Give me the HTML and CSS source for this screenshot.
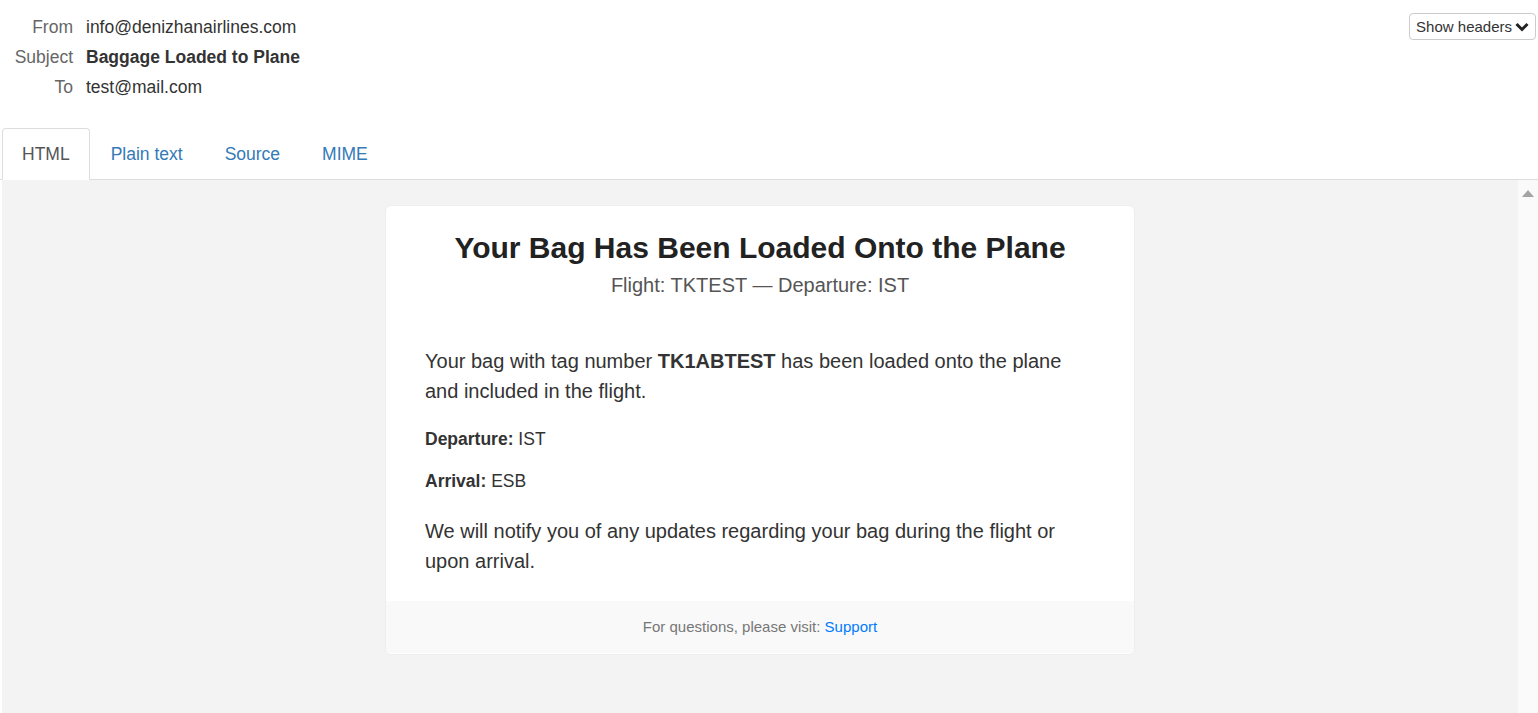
FILE: index.html
```html
<!DOCTYPE html>
<html>
<head>
<meta charset="utf-8">
<link rel="stylesheet" href="styles.css">
</head>
<body>
<div class="page">
  <div class="headers">
    <div class="rows">
      <div class="row"><span class="label">From</span><span class="value">info@denizhanairlines.com</span></div>
      <div class="row"><span class="label">Subject</span><span class="value bold">Baggage Loaded to Plane</span></div>
      <div class="row"><span class="label">To</span><span class="value">test@mail.com</span></div>
    </div>
    <button class="show-btn">Show headers <svg class="chev" width="14" height="12" viewBox="0 0 14 12"><path d="M1.5 3 L7 8.5 L12.5 3" fill="none" stroke="#222" stroke-width="3" stroke-linejoin="miter"/></svg></button>
  </div>
  <div class="tabs">
    <div class="tab active">HTML</div>
    <div class="tab">Plain text</div>
    <div class="tab">Source</div>
    <div class="tab">MIME</div>
  </div>
  <div class="preview">
    <div class="canvas">
      <div class="card">
        <div class="card-head">
          <h1 class="title">Your Bag Has Been Loaded Onto the Plane</h1>
          <div class="subtitle">Flight: TKTEST — Departure: IST</div>
        </div>
        <div class="card-body">
          <p class="lead first">Your bag with tag number <strong>TK1ABTEST</strong> has been loaded onto the plane and included in the flight.</p>
          <p class="info">Departure: <span class="plain">IST</span></p>
          <p class="info last">Arrival: <span class="plain">ESB</span></p>
          <p class="lead final">We will notify you of any updates regarding your bag during the flight or upon arrival.</p>
        </div>
        <div class="card-foot">For questions, please visit: <a class="link">Support</a></div>
      </div>
    </div>
    <div class="scrollbar"><div class="arrow"></div></div>
  </div>
</div>
</body>
</html>
```
FILE: styles.css
```css
* { box-sizing: border-box; }
html, body { margin: 0; padding: 0; height: 100%; }
body {
  font-family: "Liberation Sans", Arial, sans-serif;
  color: #333;
  background: #fff;
  overflow: hidden;
}
.page { display: flex; flex-direction: column; height: 713px; }
.headers {
  display: flex;
  justify-content: space-between;
  align-items: flex-start;
  padding: 12px 2px 0 0;
  height: 128px;
}
.rows { display: flex; flex-direction: column; }
.row { display: flex; height: 30px; align-items: center; font-size: 17.5px; }
.label { width: 73px; text-align: right; color: #666; }
.value { margin-left: 13px; color: #333; }
.bold { font-weight: bold; }
.show-btn {
  margin-top: 1px;
  height: 27px;
  padding: 0 6px 0 6px;
  border: 1px solid #ccc;
  border-radius: 4px;
  background: #fff;
  font-family: "Liberation Sans", Arial, sans-serif;
  font-size: 15px;
  color: #333;
  display: flex;
  align-items: center;
  gap: 3px;
}
.chev { margin-top: 1px; }
.tabs {
  display: flex;
  padding-left: 2px;
  border-bottom: 1px solid #ddd;
  height: 52px;
}
.tab {
  padding: 0 20px;
  display: flex;
  align-items: center;
  font-size: 17.5px;
  color: #337ab7;
  border: 1px solid transparent;
  border-radius: 4px 4px 0 0;
  margin-bottom: -1px;
}
.tab.active {
  color: #555;
  background: #fff;
  border-color: #ddd;
  border-bottom-color: #fff;
  padding: 0 19px 0 19px;
}
.preview { flex: 1; display: flex; padding-left: 2px; }
.canvas {
  flex: 1;
  background: #f3f3f3;
  display: flex;
  justify-content: center;
  align-items: flex-start;
  padding-top: 25px;
}
.scrollbar { width: 20px; background: #fafafa; display: flex; justify-content: center; padding-top: 10px; }
.arrow {
  width: 0; height: 0;
  border-left: 6px solid transparent;
  border-right: 6px solid transparent;
  border-bottom: 7px solid #a3a3a3;
}
.card {
  width: 750px;
  background: #fff;
  border: 1px solid #eee;
  border-radius: 6px;
  overflow: hidden;
  font-family: "Liberation Sans", Arial, sans-serif;
}
.card-head { text-align: center; padding: 24px 40px 0; }
.title { margin: 0; font-size: 30px; font-weight: bold; color: #222; line-height: 36px; }
.subtitle { margin-top: 7px; font-size: 20px; color: #555; line-height: 24px; }
.card-body { padding: 49px 40px 12px 39px; }
.lead { margin: 0; font-size: 20px; line-height: 30px; color: #333; }
.lead.first { margin-bottom: 20px; }
.lead.final { margin-bottom: 13px; }
.info { margin: 0 0 16px; font-size: 17.5px; line-height: 26px; color: #333; font-weight: bold; }
.info.last { margin-bottom: 22px; }
.plain { font-weight: normal; }
.card-foot {
  background: #f9f9f9;
  text-align: center;
  font-size: 15px;
  color: #777;
  height: 52px;
  line-height: 52px;
  margin-bottom: 1px;
}
.link { color: #007bff; text-decoration: none; }
```
